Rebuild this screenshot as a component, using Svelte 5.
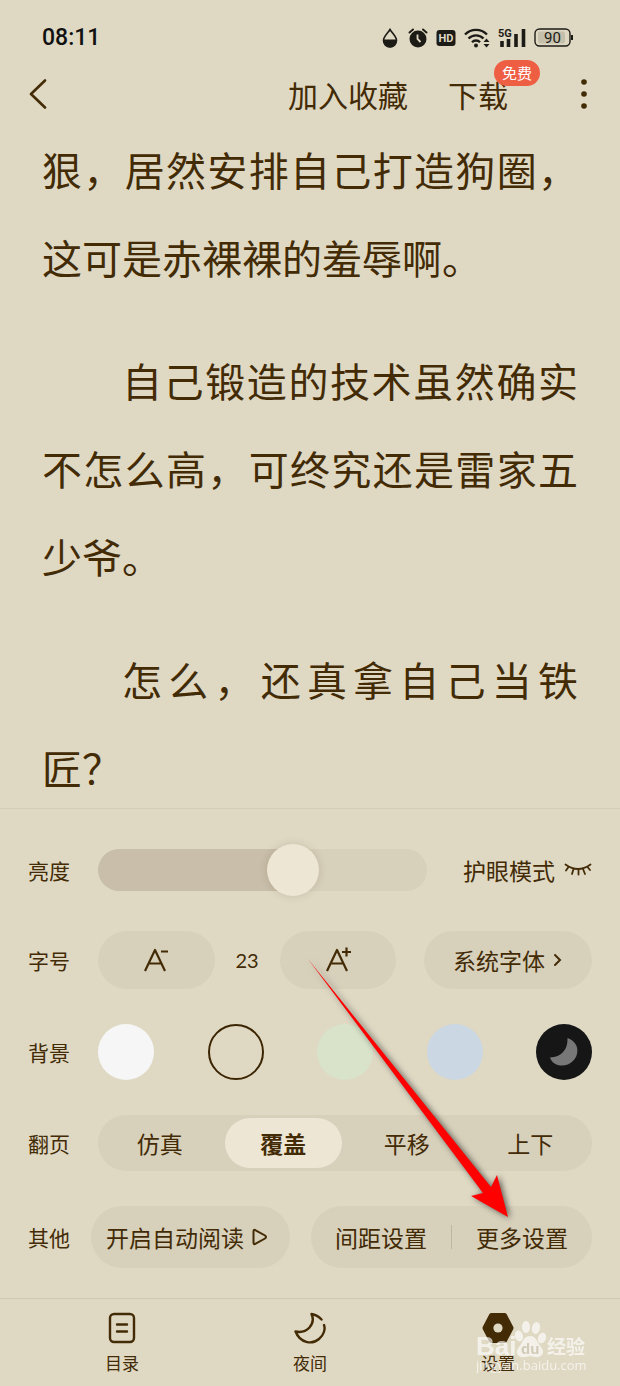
<script lang="ts">
    let brightness = $state(61);
    let fontSize = $state(23);
    let background = $state("sand");
    let pageTurn = $state("覆盖");

    const paragraphs: string[] = [
        "狠，居然安排自己打造狗圈，这可是赤裸裸的羞辱啊。",
        "自己锻造的技术虽然确实不怎么高，可终究还是雷家五少爷。",
        "怎么，还真拿自己当铁匠？",
    ];

    const backgrounds: string[] = ["white", "sand", "green", "blue", "dark"];
    const pageTurns: string[] = ["仿真", "覆盖", "平移", "上下"];
</script>

<div class="page">
    <div class="status-bar">
        <span class="time">08:11</span>
        <div class="status-icons">
            <svg width="20" height="20" viewBox="0 0 20 20">
                <path d="M10 1.500C8 5 3.500 8.500 3.500 12.500a6.500 6.500 0 0 0 13 0C16.500 8.500 12 5 10 1.500z" fill="none" stroke="#1d1b16" stroke-width="1.600" />
                <path d="M3.500 11.500h13v1.500a6.500 6.500 0 0 1-13 0z" fill="#1d1b16" />
            </svg>
            <svg width="20" height="20" viewBox="0 0 20 20">
                <circle cx="10" cy="11" r="8.500" fill="#1d1b16" />
                <path d="M1.500 4.500 5 1.500M18.500 4.500 15 1.500" stroke="#1d1b16" stroke-width="2" stroke-linecap="round" />
                <path d="M9.500 6.500V11l3 3" fill="none" stroke="#dfd9c4" stroke-width="1.800" />
            </svg>
            <svg width="20" height="18" viewBox="0 0 20 18">
                <rect x="0.500" y="1" width="19" height="16" rx="3" fill="#1d1b16" />
                <text x="10" y="13" text-anchor="middle" class="hd">HD</text>
            </svg>
            <svg width="26" height="20" viewBox="0 0 26 20">
                <path d="M1 6.500a15.500 15.500 0 0 1 22 0M4.500 10.500a10.500 10.500 0 0 1 15 0M8 14.200a5.500 5.500 0 0 1 8 0" fill="none" stroke="#1d1b16" stroke-width="2.400" />
                <circle cx="12" cy="17.500" r="2" fill="#1d1b16" />
                <path d="M19.500 14h6l-3-3.500zM19.500 16h6l-3 3.500z" fill="#1d1b16" />
            </svg>
            <svg width="28" height="20" viewBox="0 0 28 20">
                <text x="0" y="9" class="five-g">5G</text>
                <path d="M4 13v6M10.500 11v8M18 6v13M25.500 1v18" stroke="#1d1b16" stroke-width="3.600" />
            </svg>
            <svg width="40" height="20" viewBox="0 0 40 20">
                <rect x="1" y="1" width="35" height="17" rx="4.500" fill="none" stroke="#1d1b16" stroke-width="1.400" />
                <rect x="4" y="3.500" width="27" height="12" rx="2" fill="#c5c0ac" />
                <path d="M38 7v5" stroke="#1d1b16" stroke-width="2" />
                <text x="18.500" y="15" text-anchor="middle" class="battery">90</text>
            </svg>
        </div>
    </div>

    <header class="top-bar">
        <button class="plain" aria-label="返回">
            <svg width="20" height="30" viewBox="0 0 20 30">
                <path d="M17 1.500 3 15l14 13.500" fill="none" stroke="#432b06" stroke-width="2.600" stroke-linecap="round" stroke-linejoin="round" />
            </svg>
        </button>
        <div class="top-actions">
            <button class="plain action">加入收藏</button>
            <button class="plain action">下载<span class="badge">免费</span></button>
        </div>
        <button class="plain" aria-label="更多">
            <svg width="16" height="30" viewBox="0 0 16 30">
                <circle cx="8" cy="3" r="2.800" fill="#432b06" />
                <circle cx="8" cy="15" r="2.800" fill="#432b06" />
                <circle cx="8" cy="27" r="2.800" fill="#432b06" />
            </svg>
        </button>
    </header>

    <main class="reader">
        {#each paragraphs as paragraph, i}
            <p class:indent={i > 0}>{paragraph}</p>
        {/each}
    </main>

    <section class="panel">
        <div class="row">
            <label class="row-label" for="brightness">亮度</label>
            <div class="row-content">
                <input
                    id="brightness"
                    class="slider"
                    type="range"
                    min="0"
                    max="100"
                    bind:value={brightness}
                    style="--fill: {brightness}%"
                />
                <button class="plain eye">
                    护眼模式
                    <svg width="28" height="18" viewBox="0 0 28 18">
                        <path d="M1.500 3.500Q14 12.500 26.500 3.500M4.500 6 2 9.500M9.500 8 8 13M14.500 8.500v5M19 8l2 5M23.500 6l2.500 3" fill="none" stroke="#432b06" stroke-width="1.800" stroke-linecap="round" />
                    </svg>
                </button>
            </div>
        </div>

        <div class="row">
            <span class="row-label">字号</span>
            <div class="row-content">
                <button class="pill size" aria-label="减小字号" onclick={() => fontSize--}>
                    <svg width="26" height="26" viewBox="0 0 26 26">
                        <path d="M2 24 12 3l10 21M6 16.500h12M18 4.500h7" fill="none" stroke="#432b06" stroke-width="2.200" stroke-linejoin="round" />
                    </svg>
                </button>
                <span class="size-value">{fontSize}</span>
                <button class="pill size" aria-label="增大字号" onclick={() => fontSize++}>
                    <svg width="26" height="26" viewBox="0 0 26 26">
                        <path d="M2 24 12 3l10 21M6 16.500h12M17 5h9M21.500 .5v9" fill="none" stroke="#432b06" stroke-width="2.200" stroke-linejoin="round" />
                    </svg>
                </button>
                <button class="pill font">
                    系统字体
                    <svg width="10" height="14" viewBox="0 0 10 14">
                        <path d="M2 2l5 5-5 5" fill="none" stroke="#432b06" stroke-width="2" stroke-linecap="round" />
                    </svg>
                </button>
            </div>
        </div>

        <div class="row">
            <span class="row-label">背景</span>
            <div class="row-content swatches">
                {#each backgrounds as name}
                    <button
                        class="swatch {name}"
                        class:selected={background === name}
                        aria-label={name}
                        onclick={() => (background = name)}
                    >
                        {#if name === "dark"}
                            <svg width="30" height="30" viewBox="0 0 30 30">
                                <path d="M18.500 1C30 5 31 17 24 24 17 31 4 30 1 20.500 13 20 19 12 18.500 1z" fill="#777" />
                            </svg>
                        {/if}
                    </button>
                {/each}
            </div>
        </div>

        <div class="row">
            <span class="row-label">翻页</span>
            <div class="row-content segments">
                {#each pageTurns as name}
                    <button class="segment" class:active={pageTurn === name} onclick={() => (pageTurn = name)}>{name}</button>
                {/each}
            </div>
        </div>

        <div class="row others">
            <span class="row-label">其他</span>
            <div class="row-content">
                <button class="pill auto-read">
                    开启自动阅读
                    <svg width="16" height="18" viewBox="0 0 16 18">
                        <path d="M1.500 3.500v11q0 2.500 2.200 1.200l9.300-5.200q2-1.500 0-3L3.700 2.300Q1.500 1 1.500 3.500z" fill="none" stroke="#432b06" stroke-width="2" />
                    </svg>
                </button>
                <div class="pill settings">
                    <button class="plain">间距设置</button>
                    <span class="divider"></span>
                    <button class="plain">更多设置</button>
                </div>
            </div>
        </div>

        <svg class="arrow" width="202" height="262" viewBox="0 0 202 262">
            <path d="M1 1 184 229l6-12 11 42-37-21 12-3z" fill="#fe0000" />
        </svg>
    </section>

    <nav class="tabs">
        <a href="#contents">
            <svg width="32" height="32" viewBox="0 0 32 32">
                <rect x="4" y="2" width="24" height="28" rx="4" fill="none" stroke="#432b06" stroke-width="2.400" />
                <path d="M11 12.500h10M11 19.500h10" stroke="#432b06" stroke-width="2.400" stroke-linecap="round" />
            </svg>
            目录
        </a>
        <a href="#night">
            <svg width="32" height="32" viewBox="0 0 32 32">
                <path d="M27.500 7.500Q23.500 3 17.500 2C22 12 13 22 1.500 19.500 6 31 18 33 25 27 30 23 31.500 17 30 13" fill="none" stroke="#432b06" stroke-width="2.400" stroke-linecap="round" stroke-linejoin="round" />
            </svg>
            夜间
        </a>
        <a href="#settings">
            <svg width="32" height="32" viewBox="0 0 32 32">
                <path d="M9.500 3.500h13L29 16l-6.500 12.500h-13L3 16z" fill="#432b06" stroke="#432b06" stroke-width="5" stroke-linejoin="round" />
                <circle cx="16" cy="16" r="4.600" fill="#dfd9c4" />
            </svg>
            设置
        </a>
        <svg class="watermark" width="114" height="56" viewBox="0 0 114 56">
            <g fill="#fff">
                <text x="0" y="35" class="mark-name">Bai</text>
                <ellipse cx="43" cy="16" rx="4" ry="5.500" transform="rotate(-15 43 16)" />
                <ellipse cx="50" cy="7" rx="4" ry="6" />
                <ellipse cx="60" cy="8" rx="4" ry="6" transform="rotate(12 60 8)" />
                <ellipse cx="66" cy="18" rx="4" ry="5.500" transform="rotate(20 66 18)" />
                <path d="M54 16c7 0 7 7 11 11 5 6 0 11-6 10-4-1-6-1-10 0-7 1-11-4-6-10 4-4 4-11 11-11z" />
                <text x="71" y="34" class="mark-cn">经验</text>
                <text x="0" y="50" class="mark-url">jingyan.baidu.com</text>
            </g>
            <text x="45" y="34" class="mark-du">du</text>
        </svg>
    </nav>
</div>

<style>
    :global(body) {
        margin: 0;
        background: #dfd9c4;
    }

    .page {
        display: flex;
        flex-direction: column;
        height: 100vh;
        background: #dfd9c4;
        color: #432b06;
        font-family: "Noto Sans CJK SC", sans-serif;
    }

    button {
        padding: 0;
        border: none;
        background: none;
        color: inherit;
        font-family: inherit;
        font-size: 23px;
        line-height: 32px;
        white-space: nowrap;
        cursor: pointer;
    }

    svg {
        display: block;
        flex: none;
    }

    .plain {
        display: flex;
        align-items: center;
    }

    .status-bar {
        display: flex;
        flex: none;
        align-items: center;
        justify-content: space-between;
        height: 63px;
        padding: 12px 46px 0 42px;
        box-sizing: border-box;
    }

    .time {
        color: #111;
        font: 500 23px "Roboto", sans-serif;
    }

    .status-icons {
        display: flex;
        align-items: center;
        gap: 8px;
    }

    .hd {
        fill: #dfd9c4;
        font: bold 11px "Roboto", sans-serif;
    }

    .five-g {
        fill: #1d1b16;
        font: bold 11px "Roboto", sans-serif;
    }

    .battery {
        fill: #1d1b16;
        font: 15px "Roboto", sans-serif;
    }

    .top-bar {
        display: flex;
        flex: none;
        align-items: center;
        height: 62px;
        padding: 0 28px;
    }

    .top-actions {
        display: flex;
        flex: 1;
        justify-content: flex-end;
        gap: 40px;
        padding-right: 68px;
    }

    .action {
        position: relative;
        font-size: 30px;
        line-height: 40px;
    }

    .badge {
        position: absolute;
        top: -14px;
        right: -32px;
        padding: 0 8px;
        border-radius: 13px;
        background: #ee5e43;
        color: #fff;
        font-size: 15px;
        line-height: 26px;
    }

    .reader {
        flex: 1;
        min-height: 0;
        padding: 0 42px;
        overflow: hidden;
    }

    .reader p {
        margin: 0 0 35px;
        font-size: 40px;
        line-height: 88px;
        text-align: justify;
        text-spacing-trim: space-all;
    }

    .reader .indent {
        text-indent: 2em;
    }

    .panel {
        position: relative;
        display: flex;
        flex: none;
        flex-direction: column;
        gap: 35px;
        padding: 35px 28px 30px;
        border-top: 1px solid #d3ccb8;
    }

    .row {
        display: flex;
        align-items: center;
        gap: 28px;
    }

    .others {
        gap: 21px;
    }

    .row-label {
        flex: none;
        font-size: 21px;
        line-height: 32px;
    }

    .row-content {
        display: flex;
        flex: 1;
        align-items: center;
    }

    .slider {
        flex: 1;
        min-width: 0;
        height: 52px;
        margin: 0 36px 0 0;
        appearance: none;
        background: none;
    }

    .slider::-webkit-slider-runnable-track {
        height: 42px;
        border-radius: 21px;
        background: linear-gradient(to right, #c8bea9 var(--fill), #d7d0bb var(--fill));
    }

    .slider::-webkit-slider-thumb {
        width: 52px;
        height: 52px;
        margin-top: -5px;
        appearance: none;
        border-radius: 50%;
        background: #eee6d4;
        box-shadow: 0 0 8px rgba(67, 43, 6, 0.15);
    }

    .eye {
        gap: 9px;
    }

    .pill {
        display: flex;
        align-items: center;
        justify-content: center;
        height: 58px;
        border-radius: 31px;
        background: #d7d0bb;
    }

    .size {
        flex: 1;
    }

    .size-value {
        width: 65px;
        font: 20px "Lato", sans-serif;
        text-align: center;
    }

    .font {
        gap: 8px;
        width: 168px;
        margin-left: 28px;
    }

    .swatches {
        justify-content: space-between;
    }

    .swatch {
        display: flex;
        align-items: center;
        justify-content: center;
        width: 56px;
        height: 56px;
        border-radius: 50%;
    }

    .swatch.selected {
        border: 2px solid #3c2503;
    }

    .white {
        background: #f6f6f6;
    }

    .green {
        background: #d8e3ca;
    }

    .blue {
        background: #cbd7e3;
    }

    .dark {
        background: #161616;
    }

    .segments {
        height: 56px;
        border-radius: 28px;
        background: #d7d0bb;
    }

    .segment {
        flex: 1;
        height: 50px;
        margin: 0 3px;
        border-radius: 25px;
    }

    .segment.active {
        background: #eee6d4;
        font-weight: bold;
    }

    .others .row-content {
        gap: 21px;
    }

    .others .pill {
        height: 62px;
    }

    .auto-read {
        gap: 8px;
        padding: 0 22px 0 15px;
    }

    .settings {
        flex: 1;
    }

    .settings .plain {
        flex: 1;
        justify-content: center;
    }

    .divider {
        width: 1px;
        height: 24px;
        background: #bfb6a0;
    }

    .arrow {
        position: absolute;
        top: 149px;
        right: 111px;
        overflow: visible;
        filter: drop-shadow(2px 1px 3px rgba(0, 0, 0, 0.6));
        pointer-events: none;
    }

    .tabs {
        position: relative;
        display: flex;
        flex: none;
        height: 87px;
        padding: 0 28px;
        border-top: 1px solid #cfc7b3;
    }

    .tabs a {
        display: flex;
        flex: 1;
        flex-direction: column;
        align-items: center;
        gap: 6px;
        padding-top: 13px;
        color: inherit;
        font-size: 17px;
        line-height: 26px;
        text-decoration: none;
    }

    .watermark {
        position: absolute;
        top: 21px;
        right: 30px;
        opacity: 0.65;
        pointer-events: none;
    }

    .mark-name {
        font: bold 26px "Liberation Sans", sans-serif;
    }

    .mark-cn {
        font: bold 19px "Noto Sans CJK SC", sans-serif;
    }

    .mark-url {
        font: 13px "Open Sans", sans-serif;
    }

    .mark-du {
        fill: #c9c3b1;
        font: bold 15px "Liberation Sans", sans-serif;
    }
</style>
